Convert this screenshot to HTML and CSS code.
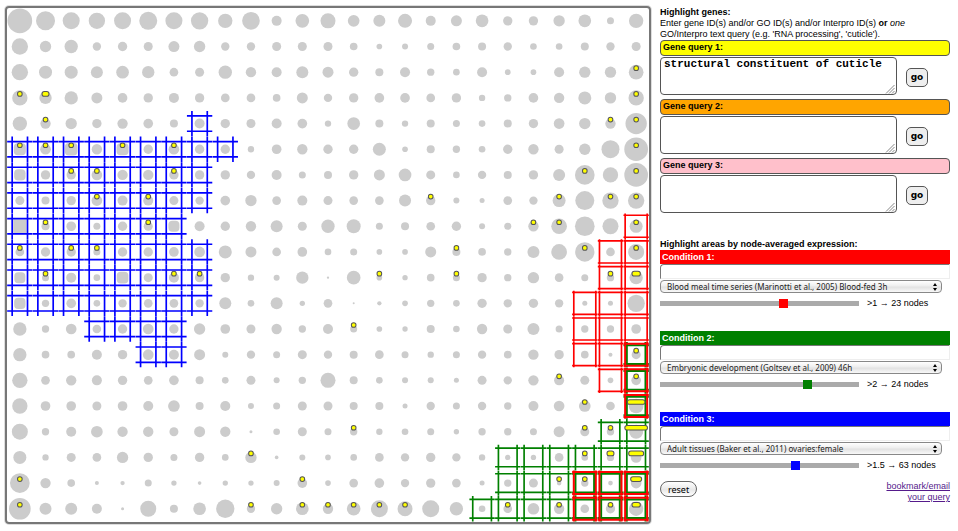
FILE: index.html
```html
<!DOCTYPE html>
<html lang="en">
<head>
<meta charset="utf-8">
<title>Expression map</title>
<link rel="stylesheet" href="styles.css">
</head>
<body>
<main class="page">
  <section class="board">
    <svg class="map" id="map" viewBox="0 0 1925 1540" role="img" aria-label="Expression map"></svg>
  </section>

  <aside class="panel">
    <section class="queries">
      <h2 class="heading">Highlight genes:</h2>
      <p class="intro">Enter gene ID(s) and/or GO ID(s) and/or Interpro ID(s) <b>or</b> <i>one</i><br>GO/Interpro text query (e.g. 'RNA processing', 'cuticle').</p>

      <form class="query">
        <label class="query-title yellow" for="q1">Gene query 1:</label>
        <div class="query-row">
          <div class="query-box">
            <textarea class="query-text" id="q1" spellcheck="false">structural constituent of cuticle</textarea>
            <svg class="grip" viewBox="0 0 10 10"><path d="M1 9.5 9.5 1M4 9.5 9.5 4M7 9.5 9.5 7"/></svg>
          </div>
          <button class="go" type="button">go</button>
        </div>
      </form>

      <form class="query">
        <label class="query-title orange" for="q2">Gene query 2:</label>
        <div class="query-row">
          <div class="query-box">
            <textarea class="query-text" id="q2"></textarea>
            <svg class="grip" viewBox="0 0 10 10"><path d="M1 9.5 9.5 1M4 9.5 9.5 4M7 9.5 9.5 7"/></svg>
          </div>
          <button class="go" type="button">go</button>
        </div>
      </form>

      <form class="query">
        <label class="query-title pink" for="q3">Gene query 3:</label>
        <div class="query-row">
          <div class="query-box">
            <textarea class="query-text" id="q3"></textarea>
            <svg class="grip" viewBox="0 0 10 10"><path d="M1 9.5 9.5 1M4 9.5 9.5 4M7 9.5 9.5 7"/></svg>
          </div>
          <button class="go" type="button">go</button>
        </div>
      </form>
    </section>

    <section class="conditions">
      <h2 class="heading">Highlight areas by node-averaged expression:</h2>

      <div class="condition red">
        <label class="condition-title" for="c1">Condition 1:</label>
        <input class="condition-filter" id="c1" type="text">
        <div class="picker">
          <select class="picker-select" aria-label="Condition 1 experiment"><option>Blood meal time series (Marinotti et al., 2005) Blood-fed 3h</option></select>
          <svg class="arrows" viewBox="0 0 6 10"><path d="M3 1 5 4H1zM3 9 1 6H5z"/></svg>
        </div>
        <div class="threshold">
          <input class="slider" id="s1" type="range" min="-4" max="4" step="0.1" value="1">
          <label for="s1">&gt;1 → 23 nodes</label>
        </div>
      </div>

      <div class="condition green">
        <label class="condition-title" for="c2">Condition 2:</label>
        <input class="condition-filter" id="c2" type="text">
        <div class="picker">
          <select class="picker-select" aria-label="Condition 2 experiment"><option>Embryonic development (Goltsev et al., 2009) 46h</option></select>
          <svg class="arrows" viewBox="0 0 6 10"><path d="M3 1 5 4H1zM3 9 1 6H5z"/></svg>
        </div>
        <div class="threshold">
          <input class="slider" id="s2" type="range" min="-4" max="4" step="0.1" value="2">
          <label for="s2">&gt;2 → 24 nodes</label>
        </div>
      </div>

      <div class="condition blue">
        <label class="condition-title" for="c3">Condition 3:</label>
        <input class="condition-filter" id="c3" type="text">
        <div class="picker">
          <select class="picker-select" aria-label="Condition 3 experiment"><option>Adult tissues (Baker et al., 2011) ovaries:female</option></select>
          <svg class="arrows" viewBox="0 0 6 10"><path d="M3 1 5 4H1zM3 9 1 6H5z"/></svg>
        </div>
        <div class="threshold">
          <input class="slider" id="s3" type="range" min="-4" max="4" step="0.1" value="1.5">
          <label for="s3">&gt;1.5 → 63 nodes</label>
        </div>
      </div>
    </section>

    <footer class="actions">
      <button class="reset" type="button">reset</button>
      <a class="bookmark" href="#bookmark">bookmark/email<br>your query</a>
    </footer>
  </aside>
</main>
<script src="map.js"></script>
</body>
</html>
```

FILE: styles.css
```css
* {
  box-sizing: border-box;
}

body {
  margin: 0;
  background: #fff;
  color: #000;
  font: 9px/11px "Liberation Sans", Arial, sans-serif;
}

.page {
  display: grid;
  grid-template-columns: minmax(0, 1fr) 290px;
  gap: 9px;
  align-items: start;
  padding: 6px 8px 6px 5px;
}

.board {
  border: 2px solid #777;
  border-radius: 4px;
  box-shadow: 0 0 0 1px #ddd;
}

.map {
  display: block;
  width: 100%;
}

.node {
  fill: #ccc;
}

.area {
  fill: none;
  stroke-width: 5;
}

.area-blue {
  stroke: #00f;
}

.area-green {
  stroke: #008000;
}

.area-red {
  stroke: #f00;
}

.area-strong {
  stroke-width: 6;
}

.hit {
  fill: #ff0;
  stroke: #555;
  stroke-width: 3;
}

.panel {
  padding-top: 1px;
}

.heading {
  margin: 0;
  font-size: 9px;
  line-height: 11px;
}

.intro {
  margin: 0;
}

.query {
  margin-bottom: 4px;
}

.query-title {
  display: block;
  height: 16px;
  margin-bottom: 1px;
  padding: 0 2px;
  border: 1px solid #555;
  border-radius: 4px;
  font-weight: bold;
  line-height: 13px;
}

.yellow {
  background: #ff0;
}

.orange {
  background: #ffa500;
}

.pink {
  background: #ffc0cb;
}

.query-row {
  display: flex;
  align-items: center;
  gap: 9px;
}

.query-box {
  position: relative;
  width: 237px;
  height: 38px;
}

.query-text {
  display: block;
  width: 100%;
  height: 100%;
  padding: 0 3px;
  border: 1px solid #555;
  border-radius: 4px;
  background: #fff;
  font: bold 11px/13px "Liberation Mono", "Courier New", monospace;
  resize: none;
}

.grip {
  position: absolute;
  right: 2px;
  bottom: 1px;
  width: 10px;
  height: 10px;
  fill: none;
  stroke: #888;
  stroke-width: 1;
}

.go {
  width: 22px;
  height: 19px;
  margin-top: 3px;
  padding: 0;
  border: 1px solid #555;
  border-radius: 5px;
  background: #eee;
  color: #000;
  font: bold 9px/15px "DejaVu Sans", sans-serif;
}

.conditions {
  margin-top: 26px;
}

.condition {
  margin-bottom: 22px;
}

.condition-title {
  display: block;
  padding: 0 2px;
  background: var(--tone);
  color: #fff;
  font-weight: bold;
  line-height: 14px;
}

.red {
  --tone: #f00;
}

.green {
  --tone: #008000;
}

.blue {
  --tone: #00f;
}

.condition-filter {
  display: block;
  width: 100%;
  height: 15px;
  padding: 0 3px;
  border: 1px solid #eee;
  border-top-color: #777;
  border-left-color: #777;
  border-radius: 4px 0 0 0;
  font: inherit;
}

.picker {
  position: relative;
  width: 282px;
  margin-top: 1px;
}

.picker-select {
  display: block;
  appearance: none;
  width: 100%;
  height: 13px;
  padding: 0 6px;
  border: 1px solid #888;
  border-radius: 4px;
  background: linear-gradient(#fff, #eee 45%, #e2e2e2 55%, #f8f8f8);
  color: #222;
  font: 8px/11px "Noto Sans", sans-serif;
}

.arrows {
  position: absolute;
  top: 2px;
  right: 4px;
  width: 6px;
  height: 10px;
  pointer-events: none;
}

.threshold {
  display: flex;
  align-items: center;
  gap: 8px;
  margin-top: 5px;
}

.slider {
  appearance: none;
  width: 199px;
  height: 11px;
  margin: 0;
  background: linear-gradient(#aaa, #aaa) center / 100% 5px no-repeat;
}

.slider::-webkit-slider-thumb {
  appearance: none;
  width: 9px;
  height: 9px;
  background: var(--tone);
}

.actions {
  display: flex;
  justify-content: space-between;
  align-items: flex-start;
  margin-top: -12px;
}

.reset {
  width: 37px;
  height: 16px;
  padding: 0;
  border: 1px solid #666;
  border-radius: 8px;
  background: linear-gradient(#fff, #e8e8e8 55%, #fff);
  color: #000;
  font: 9px/13px "Noto Sans", sans-serif;
}

.bookmark {
  color: #551a8b;
  text-align: right;
}
```

FILE: map.js
```js
// Node diameters, one row of the map per line, in map units (a cell is 77 units).
const sizes = [
  [74,57,51,49,51,54,51,52,43,53,30,41,45,35,36,42,30,33,38,28,28,34,38,21,43],
  [49,34,40,25,28,27,33,34,25,25,27,27,27,23,17,18,21,23,24,25,20,20,24,25,27],
  [49,39,39,36,38,37,26,27,40,31,30,36,33,28,24,30,22,20,30,17,17,30,34,34,44],
  [46,37,40,33,29,28,30,28,26,26,23,33,25,28,29,29,26,28,19,22,29,31,39,34,46],
  [43,31,34,28,31,29,24,30,28,27,30,29,19,38,24,19,24,21,20,24,28,32,34,31,64],
  [36,32,38,31,36,28,32,28,28,19,29,31,28,28,39,17,24,22,20,28,31,27,34,54,71],
  [34,28,28,32,31,31,28,28,28,25,30,21,24,28,33,38,27,20,25,24,28,36,59,46,71],
  [27,24,28,32,30,30,27,25,29,34,26,30,27,26,26,36,28,18,15,26,25,39,57,49,49],
  [40,24,29,21,28,27,33,30,28,31,36,27,40,42,21,24,26,28,18,21,31,47,59,48,39],
  [26,28,28,21,28,28,29,32,39,33,26,29,20,21,17,17,33,24,23,22,36,47,58,26,48],
  [33,21,30,20,35,27,30,28,28,19,18,37,7,41,17,16,23,21,28,22,34,26,21,22,40],
  [34,22,29,20,25,26,26,25,36,20,36,16,26,6,13,17,22,20,28,25,28,25,15,15,52],
  [40,22,32,26,28,32,28,34,29,27,31,22,30,21,17,16,24,20,31,27,36,21,22,22,29],
  [40,23,23,30,28,32,30,33,18,25,21,27,25,24,26,21,19,21,25,23,31,28,23,12,27],
  [46,26,31,30,28,26,29,24,20,27,18,22,45,24,20,18,18,15,27,25,31,30,27,17,29],
  [46,29,29,27,29,30,35,24,30,18,21,27,27,24,24,15,25,21,25,22,30,32,35,26,44],
  [48,22,30,35,31,31,27,33,31,9,20,27,21,22,19,20,21,16,22,22,21,33,27,22,42],
  [39,19,27,26,34,28,21,28,20,34,11,18,17,20,26,25,28,25,19,16,16,26,20,22,32],
  [59,31,23,12,13,21,16,11,16,16,18,29,17,26,29,25,28,26,15,22,27,14,22,14,32],
  [65,36,36,30,9,48,24,38,55,25,34,38,31,41,51,45,51,40,20,26,35,31,26,28,43]
];

// Highlighted areas as row: [first column, last column].
const areas = {
  blue: { 4: [7, 7], 5: [0, 8], 6: [0, 7], 7: [0, 7], 8: [0, 6], 9: [0, 7], 10: [0, 7], 11: [0, 7], 12: [3, 6], 13: [5, 6] },
  green: { 13: [24, 24], 14: [24, 24], 15: [24, 24], 16: [23, 24], 17: [19, 24], 18: [19, 24], 19: [18, 24] },
  red: { 8: [24, 24], 9: [23, 24], 10: [23, 24], 11: [22, 24], 12: [22, 24], 13: [22, 24], 14: [23, 24], 15: [24, 24], 18: [22, 24], 19: [22, 24] }
};
const insets = { blue: 23, green: 28, red: 33 };

// Gene hits as row: list of columns.
const hits = {
  2: [24], 3: [0, 1, 24], 4: [1, 23, 24], 5: [0, 1, 2, 4, 6, 24], 6: [2, 3, 6, 22, 24],
  7: [3, 5, 16, 21, 23, 24], 8: [1, 5, 20, 21, 24], 9: [0, 2, 3, 17, 22, 24],
  10: [1, 6, 7, 14, 17, 23, 24], 12: [13], 13: [24], 14: [21, 24], 15: [22, 24],
  16: [13, 22, 23, 24], 17: [9, 22, 23, 24], 18: [0, 11, 21, 22, 24],
  19: [0, 9, 11, 12, 13, 14, 15, 19, 21, 23, 24]
};
// Nodes with several hits get a wider marker.
const wide = { "3,1": 21, "10,24": 25, "15,24": 53, "16,24": 68, "17,23": 21, "17,24": 45, "18,24": 33, "19,24": 25 };

const map = document.getElementById("map");
const cell = 77;
const center = i => i * cell + cell / 2;

function draw(name, attributes) {
  const element = document.createElementNS("http://www.w3.org/2000/svg", name);
  for (const key in attributes) element.setAttribute(key, attributes[key]);
  map.appendChild(element);
}

function inArea(color, row, column) {
  const range = areas[color][row];
  return Boolean(range) && column >= range[0] && column <= range[1];
}

sizes.forEach((line, row) => line.forEach((size, column) => {
  let radius = size / 2;
  if (inArea("blue", row, column) && size > 32) radius = size === 40 ? 1 : 12;
  draw("rect", { class: "node", x: center(column) - size / 2, y: center(row) - size / 2, width: size, height: size, rx: radius });
}));

for (const color of ["blue", "green", "red"]) {
  for (const key in areas[color]) {
    const row = Number(key);
    for (let column = areas[color][row][0]; column <= areas[color][row][1]; column++) {
      const x = center(column), y = center(row), d = insets[color], e = 38;
      const shared = inArea("green", row, column) && inArea("red", row, column);
      draw("path", {
        class: `area area-${color}` + (shared ? " area-strong" : ""),
        d: `M${x - d} ${y - e}V${y + e}M${x + d} ${y - e}V${y + e}M${x - e} ${y - d}H${x + e}M${x - e} ${y + d}H${x + e}`
      });
    }
  }
}

for (const row in hits) {
  for (const column of hits[row]) {
    const width = wide[`${row},${column}`] || 14;
    draw("rect", { class: "hit", x: center(column) - width / 2, y: center(Number(row)) - 19, width: width, height: 14, rx: 7 });
  }
}
```
